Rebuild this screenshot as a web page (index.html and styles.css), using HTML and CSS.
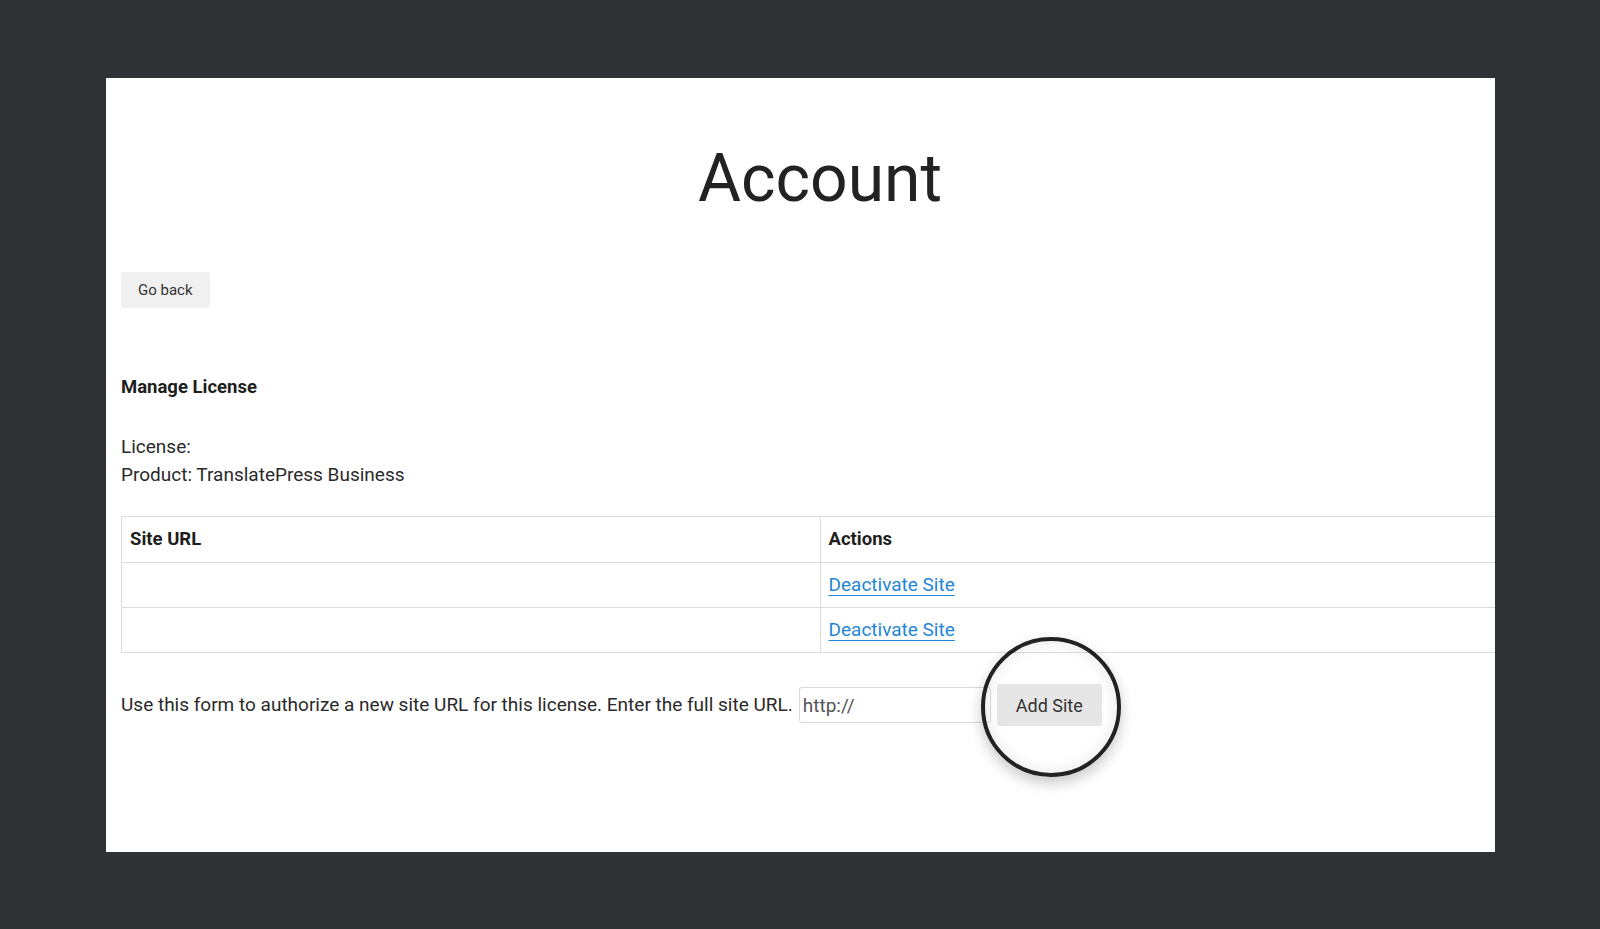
FILE: index.html
```html
<!DOCTYPE html>
<html lang="en">
<head>
    <meta charset="UTF-8">
    <meta name="viewport" content="width=device-width, initial-scale=1.0">
    <title>Account</title>
    <link rel="stylesheet" href="styles.css">
</head>
<body>

    <div class="screen">
        <div class="content">
            <h1 class="title">Account</h1>

            <button class="btn back">Go back</button>

            <h2 class="section">Manage License</h2>

            <div class="info">
                <div>License:</div>
                <div>Product: TranslatePress Business</div>
            </div>

            <table class="sites">
                <thead>
                    <tr>
                        <th>Site URL</th>
                        <th>Actions</th>
                    </tr>
                </thead>
                <tbody>
                    <tr>
                        <td></td>
                        <td><a href="#">Deactivate Site</a></td>
                    </tr>
                    <tr>
                        <td></td>
                        <td><a href="#">Deactivate Site</a></td>
                    </tr>
                </tbody>
            </table>

            <form class="add-form" onsubmit="return false">
                <span>Use this form to authorize a new site URL for this license. Enter the full site URL.</span>
                <input type="text" class="url" placeholder="http://">
                <button class="btn add">Add Site</button>
            </form>
        </div>

        <!-- highlight ring around the button -->
        <div class="ring"></div>
    </div>

</body>
</html>
```

FILE: styles.css
```css
*{
    box-sizing: border-box;
}
html, body{
    margin: 0;
    padding: 0;
}

body{
    background-color: #303135;
    padding: 78px 105px 77px 106px;
    font-family: Roboto, 'Liberation Sans', sans-serif;
    color: #2a2a2a;
}

.screen{
    position: relative;
    width: 1389px;
    height: 774px;
    background: #fff;
    overflow: hidden;
}

.content{
    width: 1413px;
    padding-left: 15px;
}

.title{
    margin: 61px 0 0;
    font-size: 66px;
    line-height: 80px;
    font-weight: 400;
    text-align: center;
    color: #222;
}

.btn{
    font-family: inherit;
    border: none;
    border-radius: 3px;
    color: #333;
    cursor: pointer;
}

.back{
    display: block;
    margin-top: 53px;
    height: 36px;
    padding: 0 17px;
    font-size: 15px;
    background: #f0f0f0;
}

.section{
    margin: 65px 0 0;
    font-size: 18.5px;
    line-height: 28px;
    font-weight: 700;
    color: #1e1e1e;
}

.info{
    margin-top: 32px;
    font-size: 19px;
    line-height: 28px;
}

.sites{
    margin-top: 27px;
    width: 100%;
    border-collapse: collapse;
    font-size: 19px;
    line-height: 28px;
}
.sites th, .sites td{
    width: 50%;
    border: 1px solid #dcdcdc;
    padding: 8px 8px;
    text-align: left;
}
.sites th{
    font-size: 18.5px;
    line-height: 29px;
    font-weight: 700;
    color: #1e1e1e;
}
.sites a{
    color: #1f86d6;
    text-decoration: underline;
    text-underline-offset: 4px;
}

.add-form{
    display: flex;
    align-items: center;
    gap: 6px;
    margin-top: 31px;
    height: 42px;
    font-size: 19px;
    line-height: 30px;
}

.url{
    width: 192px;
    height: 36px;
    border: 1px solid #d9d9d9;
    border-radius: 3px;
    padding: 0 3px;
    font-family: inherit;
    font-size: 19px;
    color: #333;
}
.url::placeholder{
    color: #555;
}

.add{
    height: 42px;
    padding: 0 19px;
    font-size: 18px;
    background: #e6e6e6;
}

.ring{
    position: absolute;
    left: 875px;
    top: 559px;
    width: 140px;
    height: 140px;
    border: 4px solid #222;
    border-radius: 50%;
    box-shadow: 0 6px 14px rgba(0,0,0,.22), inset 0 0 16px rgba(0,0,0,.1);
}
```
